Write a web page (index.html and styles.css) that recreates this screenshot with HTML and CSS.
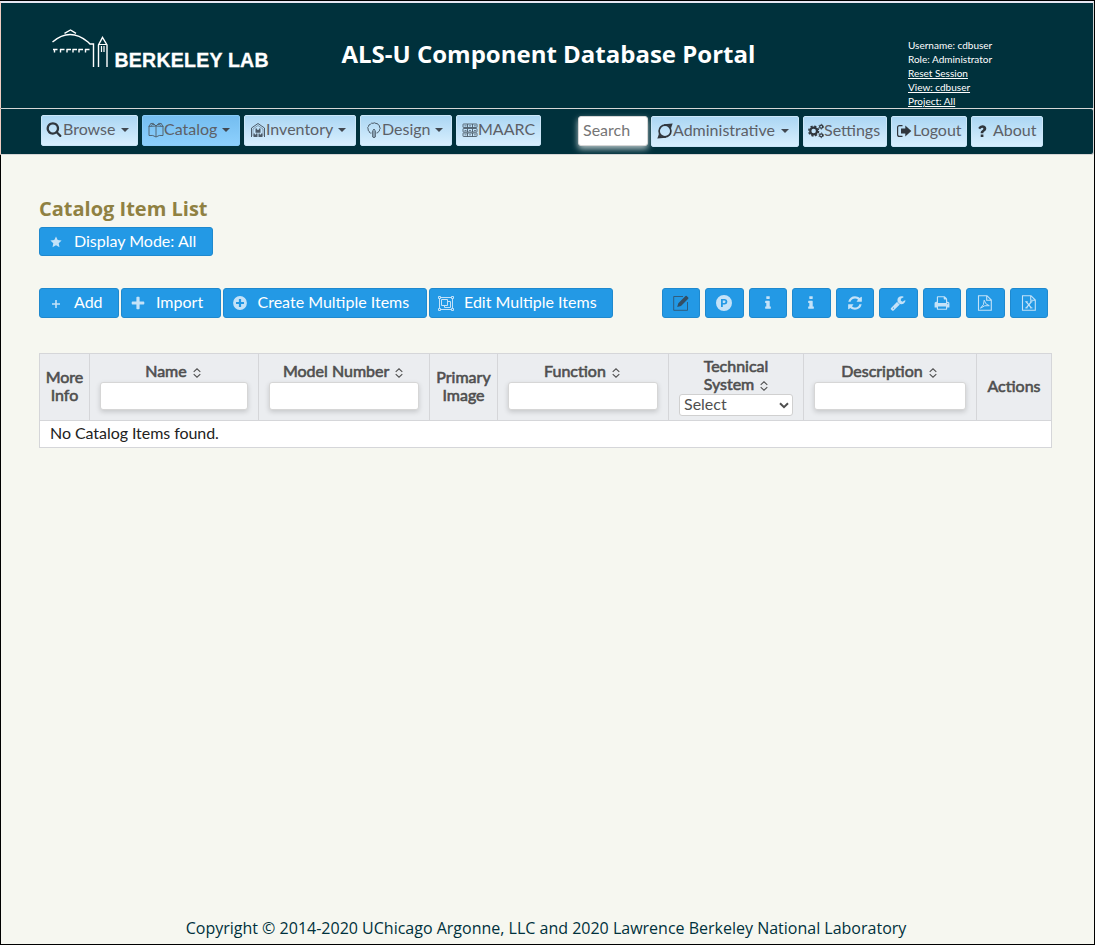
FILE: index.html
```html
<!DOCTYPE html>
<html lang="en">
<head>
<meta charset="utf-8">
<title>ALS-U Component Database Portal</title>
<link rel="stylesheet" href="styles.css">
</head>
<body>
<svg class="sprite" aria-hidden="true">
  <symbol id="search" viewBox="0 0 1792 1792"><path d="M1216 832q0-185-131.5-316.5t-316.5-131.5-316.5 131.5-131.5 316.5 131.5 316.5 316.5 131.5 316.5-131.5 131.5-316.5zm512 832q0 52-38 90t-90 38q-54 0-90-38l-343-342q-179 124-399 124-143 0-273.5-55.5t-225-150-150-225-55.5-273.5 55.5-273.5 150-225 225-150 273.5-55.5 273.5 55.5 225 150 150 225 55.5 273.5q0 220-124 399l343 343q37 37 37 90z"/></symbol>
  <symbol id="catalog" viewBox="0 0 16 16"><path fill="none" stroke="currentColor" stroke-width=".9" d="M.5 4.500L8 4l7.500.500M1 4.500V13.500q4-.800 7 1.500q3-2.300 7-1.500V4.500M8 4v11M1 4l2-2.500M15 4l-2-2.500M8 4Q5.500 0 2.500 1.500M8 4Q10.500 0 13.500 1.500M3 3.800Q4 1.500 6 2.600M13 3.800Q12 1.500 10 2.600"/></symbol>
  <symbol id="inventory" viewBox="0 0 16 16"><path fill="none" stroke="currentColor" stroke-width="1" d="M1.500 15V6L8 1.500L14.500 6v9"/><path fill="none" stroke="currentColor" stroke-width=".5" d="M3 14V7l5-3.500L13 7v7"/><path d="M5.500 6.500h1.500v1.200h2V6.500h1.500v4.200h-5zM3.500 11.500h1.300v1h1.200v-1h1.500v3.500h-4zM8.500 11.500h1.300v1h1.200v-1h1.500v3.500h-4z"/></symbol>
  <symbol id="design" viewBox="0 0 16 16"><path fill="none" stroke="currentColor" stroke-width="1" d="M5.500 11H4.300Q3 10.700 3.300 9.300Q1.500 8.700 2.200 7Q1 5.500 2.500 4.400Q2.500 2.500 4.300 2.400Q5.500.500 7 1.300Q8.500.200 10 1.500Q12 1.200 12.300 2.900Q14 3.300 13.500 5Q15 6.300 13.500 7.600Q14 9.200 12.400 9.600Q12.300 11 10.500 11M6.700 15V9L8 7l1.300 2v6q-1.300 1.200-2.600 0z"/><path d="M7.300 9h1.400v6H7.300z" opacity=".55"/></symbol>
  <symbol id="server" viewBox="0 0 16 16"><path fill="none" stroke="currentColor" stroke-width=".9" d="M1.500 2h13q.5 0 .5.500V5q0 .5-.5.500h-13Q1 5.500 1 5V2.500Q1 2 1.500 2zM1.500 6.500h13q.5 0 .5.500v2.500q0 .5-.5.500h-13Q1 10 1 9.500V7q0-.5.5-.5zM1.500 11h13q.5 0 .5.500V14q0 .5-.5.500h-13Q1 14.500 1 14v-2.500q0-.5.500-.5zM5.500 2v3.500M5.500 6.500V10M5.500 11v3.500M10.500 2v3.500M10.500 6.500V10M10.500 11v3.500"/><path d="M2.500 3.400h2v.8h-2zM2.500 7.900h2v.8h-2zM2.500 12.400h2v.8h-2zM7 3.400h2v.8H7zM7 7.900h2v.8H7zM7 12.400h2v.8H7zM12 3.400h2v.8h-2zM12 7.900h2v.8h-2zM12 12.400h2v.8h-2z"/></symbol>
  <symbol id="admin" viewBox="0 0 16 16"><ellipse cx="8" cy="8" rx="5.900" ry="5.900" fill="none" stroke="currentColor" stroke-width="1.700"/><path d="M7 1.300L15.700.500Q14.800 2.500 14 5.500L12 3Q10 1.800 7 2.500zM9 14.700L.300 15.500Q1.200 13.500 2 10.500L4 13Q6 14.200 9 13.500z"/></symbol>
  <symbol id="settings" viewBox="0 0 17 16"><circle cx="6" cy="8" r="3.600" fill="none" stroke="currentColor" stroke-width="2.400"/><circle cx="6" cy="8" r="5.200" fill="none" stroke="currentColor" stroke-width="1.600" stroke-dasharray="2.280 1.804"/><circle cx="14" cy="3.400" r="1.600" fill="none" stroke="currentColor" stroke-width="1.300"/><circle cx="14" cy="3.400" r="2.500" fill="none" stroke="currentColor" stroke-width=".9" stroke-dasharray="1.300 1.318"/><circle cx="14" cy="12.600" r="1.600" fill="none" stroke="currentColor" stroke-width="1.300"/><circle cx="14" cy="12.600" r="2.500" fill="none" stroke="currentColor" stroke-width=".9" stroke-dasharray="1.300 1.318"/></symbol>
  <symbol id="logout" viewBox="0 0 16 16"><path fill="none" stroke="currentColor" stroke-width="1.200" d="M6.500 2.600H3.500Q1.600 2.600 1.600 4.600v6.800q0 2 1.900 2H6.500"/><path d="M5 5.600h4.300V2.400L15.300 8l-6 5.600v-3.200H5z"/></symbol>
  <symbol id="question" viewBox="0 0 16 16"><path d="M6.700 11.400h2.700V14H6.700zM6.700 10.300V9.200q0-1.200 1.500-2 1.200-.6 1.200-1.400 0-1-1.300-1-1.100 0-2 1.500L4.200 4.900Q5.700 2.300 8.300 2.300q3.900.2 4 3.500 0 1.700-1.900 2.700-1 .6-1 1.200v.6z"/></symbol>
  <symbol id="star" viewBox="0 0 16 16"><path d="M8 2.500l1.700 3.500 3.900.5-2.900 2.700.8 4L8 11.300l-3.500 1.900.8-4L2.400 6.500 6.300 6z"/></symbol>
  <symbol id="plus-thin" viewBox="0 0 16 16"><path d="M7.200 5h1.600v3.200H12v1.600H8.800V13H7.200V9.800H4V8.200h3.200z"/></symbol>
  <symbol id="plus" viewBox="0 0 16 16"><path d="M7.200 1.700h1.600q.8 0 .8.800v3.900h3.900q.8 0 .8.800v1.600q0 .8-.8.800H9.600v3.900q0 .8-.8.800H7.200q-.8 0-.8-.8V9.600H2.500q-.8 0-.8-.8V7.200q0-.8.800-.8h3.900V2.500q0-.8.800-.8z"/></symbol>
  <symbol id="plus-circle" viewBox="0 0 16 16"><path fill-rule="evenodd" d="M8 1.100a6.900 6.900 0 1 1 0 13.800a6.900 6.900 0 1 1 0-13.800zM6.900 4v2.900H4v2.200h2.900V12h2.200V9.100H12V6.900H9.100V4z"/></symbol>
  <symbol id="group" viewBox="0 0 16 16"><path fill="none" stroke="currentColor" stroke-width="1" d="M.5 1.500h2v2h-2zM13.500 1.500h2v2h-2zM.5 13.500h2v2h-2zM13.500 13.500h2v2h-2zM2.500 2.500h11M2.500 14.500h11M1.500 3.500v10M14.500 3.500v10M3.500 4.500h6v6h-6zM9.500 6.500h3v6h-6v-2"/></symbol>
  <symbol id="edit" viewBox="0 0 16 16"><path fill="none" stroke="currentColor" stroke-width=".8" d="M10 1.500H.7v13.800h13.800V7"/><path d="M4.200 12l1.100-3.800L12.500 1q.6-.6 1.200 0l1.500 1.500q.6.600 0 1.200L8 10.900z"/></symbol>
  <symbol id="parking" viewBox="0 0 16 16"><path fill-rule="evenodd" d="M8 0a8 8 0 1 1 0 16A8 8 0 1 1 8 0zM5 4v8h1.800V9.500h2q2.500-.2 2.600-2.700Q11.300 4.200 8.800 4zm1.800 1.600h1.700q1 .1 1 1.200 0 1-1 1.100H6.800z"/></symbol>
  <symbol id="info" viewBox="-576 0 1792 1792"><path d="M640 1344v128q0 26-19 45t-45 19H64q-26 0-45-19t-19-45v-128q0-26 19-45t45-19h64V896H64q-26 0-45-19T0 832V704q0-26 19-45t45-19h384q26 0 45 19t19 45v576h64q26 0 45 19t19 45zM512 192v192q0 26-19 45t-45 19H192q-26 0-45-19t-19-45V192q0-26 19-45t45-19h256q26 0 45 19t19 45z"/></symbol>
  <symbol id="refresh" viewBox="0 0 1792 1792"><path d="M1639 1056q0 5-1 7-64 268-268 434.500t-478 166.500q-146 0-282.500-55t-243.500-157l-129 129q-19 19-45 19t-45-19-19-45v-448q0-26 19-45t45-19h448q26 0 45 19t19 45-19 45l-137 137q71 66 161 102t187 36q134 0 250-65t186-179q11-17 53-117 8-23 30-23h192q13 0 22.500 9.500t9.500 22.500zm25-800v448q0 26-19 45t-45 19h-448q-26 0-45-19t-19-45 19-45l138-138q-148-137-349-137-134 0-250 65t-186 179q-11 17-53 117-8 23-30 23h-199q-13 0-22.500-9.500t-9.500-22.500v-7q65-268 270-434.500t480-166.500q146 0 284 55.500t245 156.500l130-129q19-19 45-19t45 19 19 45z"/></symbol>
  <symbol id="wrench" viewBox="0 0 1792 1792"><path d="M448 1472q0-26-19-45t-45-19-45 19-19 45 19 45 45 19 45-19 19-45zm644-420l-682 682q-37 37-90 37-52 0-91-37l-106-108q-38-36-38-90 0-53 38-91l681-681q39 98 114.500 173.500t173.500 114.500zm634-435q0 39-23 106-47 134-164.500 217.500t-258.500 83.500q-185 0-316.500-131.500t-131.500-316.500 131.500-316.500 316.500-131.500q58 0 121.500 16.500t107.500 46.500q16 11 16 28t-16 28l-293 169v224l193 107q5-3 79-48.500t135.500-81 70.500-35.500q15 0 23.500 10t8.500 25z"/></symbol>
  <symbol id="print" viewBox="0 0 1792 1792"><path d="M448 1536h896v-256h-896v256zm0-640h896v-384h-160q-40 0-68-28t-28-68v-160h-640v640zm1152 64q0-26-19-45t-45-19-45 19-19 45 19 45 45 19 45-19 19-45zm128 0v416q0 13-9.500 22.500t-22.500 9.500h-224v160q0 40-28 68t-68 28h-960q-40 0-68-28t-28-68v-160h-224q-13 0-22.500-9.500t-9.500-22.500v-416q0-79 56.500-135.500t135.500-56.500h64v-544q0-40 28-68t68-28h672q40 0 88 20t76 48l152 152q28 28 48 76t20 88v256h64q79 0 135.500 56.500t56.500 135.500z"/></symbol>
  <symbol id="pdf" viewBox="0 0 16 16"><path fill="none" stroke="currentColor" stroke-width="1.100" d="M1.500.700h8.500l4.300 4.300v10.300H1.500zM9.700.700v4.600h4.600"/><path fill="none" stroke="currentColor" stroke-width="1" d="M3.500 13.200Q7.500 10 7.200 5.200Q8 9.500 12.300 10.700Q7.500 9.600 3.500 13.200z"/></symbol>
  <symbol id="excel" viewBox="0 0 16 16"><path fill="none" stroke="currentColor" stroke-width="1.100" d="M1.500.700h8.500l4.300 4.300v10.300H1.500zM9.700.700v4.600h4.600"/><path fill="none" stroke="currentColor" stroke-width="1.300" d="M5.300 6.800l5 6M10.300 6.800l-5 6"/><path fill="none" stroke="currentColor" stroke-width=".9" d="M4.200 6.700h2.500M9 6.700h2.500M4.200 12.900h2.500M9 12.900h2.500"/></symbol>
  <symbol id="sort" viewBox="0 0 8 10"><path fill="none" stroke="currentColor" stroke-width="1.100" d="M.7 3.800L4 .800l3.300 3M.7 6.200L4 9.200l3.300-3"/></symbol>
  <symbol id="chevron" viewBox="0 0 10 7"><path fill="none" stroke="currentColor" stroke-width="2" d="M1 1.200l4 4 4-4"/></symbol>
</svg>

<header class="banner">
  <svg class="logo" viewBox="0 0 220 42" role="img" aria-label="Berkeley Lab">
    <g fill="none" stroke="#fff" stroke-width="1.400">
      <path d="M.5 14Q18-1 36 14L38 16H41.500V39M12.500 5.300L18.500 2l5.500 3.300M46.500 39V17L50.500 9.500L55 17V39"/>
      <path stroke-width="1.200" d="M46 16.500h9M49.500 18v6M52 18v6"/>
      <path d="M1 21.500h4.500M8 21.500h4.500M14.500 21.500h4.500M20.500 21.500h4.500M26.500 21.500h4.500M33 21.500h4.500M2.500 21v3.500M8.500 21v3.500M15 21v3.500M21 21v3.500M27 21v3.500M33.500 21v3.500"/>
    </g>
    <text x="62.500" y="38.500" textLength="154">BERKELEY LAB</text>
  </svg>
  <h1 class="portal">ALS-U Component Database Portal</h1>
  <div class="session">
    <span>Username: cdbuser</span>
    <span>Role: Administrator</span>
    <a>Reset Session</a>
    <a>View: cdbuser</a>
    <a>Project: All</a>
  </div>
</header>

<nav class="menubar">
  <div class="menu">
    <a class="item browse"><svg class="ico"><use href="#search"/></svg>Browse<i class="caret"></i></a>
    <a class="item catalog active"><svg class="ico"><use href="#catalog"/></svg>Catalog<i class="caret"></i></a>
    <a class="item inventory"><svg class="ico"><use href="#inventory"/></svg>Inventory<i class="caret"></i></a>
    <a class="item design"><svg class="ico"><use href="#design"/></svg>Design<i class="caret"></i></a>
    <a class="item maarc"><svg class="ico"><use href="#server"/></svg>MAARC</a>
  </div>
  <div class="menu right">
    <input class="search" placeholder="Search">
    <a class="item administrative"><svg class="ico"><use href="#admin"/></svg>Administrative<i class="caret"></i></a>
    <a class="item settings"><svg class="ico"><use href="#settings"/></svg>Settings</a>
    <a class="item logout"><svg class="ico"><use href="#logout"/></svg>Logout</a>
    <a class="item about"><svg class="ico"><use href="#question"/></svg><span class="about-label">About</span></a>
  </div>
</nav>

<main class="content">
  <h2 class="title">Catalog Item List</h2>
  <button class="btn mode"><svg class="ico"><use href="#star"/></svg>Display Mode: All</button>

  <div class="toolbar">
    <div class="actions">
      <button class="btn add"><svg class="ico"><use href="#plus-thin"/></svg>Add</button>
      <button class="btn import"><svg class="ico"><use href="#plus"/></svg>Import</button>
      <button class="btn create"><svg class="ico"><use href="#plus-circle"/></svg>Create Multiple Items</button>
      <button class="btn multi"><svg class="ico"><use href="#group"/></svg>Edit Multiple Items</button>
    </div>
    <div class="tools">
      <button class="btn tool dark"><svg class="ico"><use href="#edit"/></svg></button>
      <button class="btn tool"><svg class="ico"><use href="#parking"/></svg></button>
      <button class="btn tool"><svg class="ico"><use href="#info"/></svg></button>
      <button class="btn tool"><svg class="ico"><use href="#info"/></svg></button>
      <button class="btn tool"><svg class="ico"><use href="#refresh"/></svg></button>
      <button class="btn tool"><svg class="ico"><use href="#wrench"/></svg></button>
      <button class="btn tool"><svg class="ico"><use href="#print"/></svg></button>
      <button class="btn tool"><svg class="ico"><use href="#pdf"/></svg></button>
      <button class="btn tool"><svg class="ico"><use href="#excel"/></svg></button>
    </div>
  </div>

  <section class="table">
    <div class="head">
      <div class="cell plain">More<br>Info</div>
      <div class="cell"><span>Name <svg class="sort"><use href="#sort"/></svg></span><input class="filter"></div>
      <div class="cell"><span>Model Number <svg class="sort"><use href="#sort"/></svg></span><input class="filter"></div>
      <div class="cell plain">Primary<br>Image</div>
      <div class="cell"><span>Function <svg class="sort"><use href="#sort"/></svg></span><input class="filter"></div>
      <div class="cell technical"><span>Technical<br>System <svg class="sort"><use href="#sort"/></svg></span><div class="pick" role="combobox">Select<svg class="chevron"><use href="#chevron"/></svg></div></div>
      <div class="cell"><span>Description <svg class="sort"><use href="#sort"/></svg></span><input class="filter"></div>
      <div class="cell plain">Actions</div>
    </div>
    <div class="empty">No Catalog Items found.</div>
  </section>
</main>

<footer class="footer">Copyright © 2014-2020 UChicago Argonne, LLC and 2020 Lawrence Berkeley National Laboratory</footer>
</body>
</html>
```

FILE: styles.css
```css
* { box-sizing: border-box; }

body {
  margin: 0;
  height: 945px;
  display: flex;
  flex-direction: column;
  overflow: hidden;
  background: linear-gradient(#000, #000) 0 0 / 1px 100% no-repeat #f6f7f0;
  border: 1px solid #000;
  border-left: 0;
  font: 16px/20px Lato, sans-serif;
}

.sprite { display: none; }
.ico { width: 16px; height: 16px; flex: none; fill: currentColor; }

.banner {
  height: 107px;
  flex: none;
  display: flex;
  border-top: 2px solid #e6e6f2;
  border-right: 1px solid #cfd4d4;
  border-left: 1px solid #f0cdc2;
  background: #00313c;
  color: #fff;
}
.logo { width: 220px; height: 42px; margin: 25px 0 0 51px; flex: none; }
.logo text { font: bold 19.5px "Liberation Sans", sans-serif; fill: #fff; stroke: #fff; stroke-width: .3px; }
.portal { margin: 34px 0 0 69.5px; width: 414.5px; font: bold 24px/34px "Open Sans", sans-serif; white-space: nowrap; }
.session {
  display: flex;
  flex-direction: column;
  margin: 35px 0 0 152px;
  font-size: 10px;
  line-height: 14px;
}
.session a { text-decoration: underline; }

.menubar {
  height: 47px;
  width: 1094px;
  flex: none;
  display: flex;
  justify-content: space-between;
  padding: 6px 50px 0 40px;
  border: 1px solid #d6d6d6;
  border-left-color: #f0cdc2;
  border-radius: 0 3px 3px 0;
  background: #00313c;
}
.menu { display: flex; gap: 4px; }
.menu.right { padding-top: 1px; }
.item {
  height: 31px;
  display: flex;
  align-items: center;
  padding: 0 0 3px 6px;
  border: 1px solid #cbe6f8;
  border-radius: 2px;
  background: linear-gradient(#abd6f3, #d8effe);
  color: #5c6067;
  white-space: nowrap;
}
.item .ico { color: #30363d; margin: 1px 0 0 -1px; }
.browse .ico { margin: 0 1px 0 -2px; }
.item.active { background: linear-gradient(#74bdf0, #8dd0fd); border-color: #88cbf8; }
.catalog .ico, .inventory .ico, .design .ico, .maarc .ico { color: #4c5b68; }
.caret { margin: 2px 0 0 5px; border: 4px solid transparent; border-top-color: #414851; border-bottom: 0; }
.browse { width: 97px; }
.catalog { width: 98px; }
.inventory { width: 112px; }
.design { width: 92px; }
.design .caret { margin-left: 4px; }
.maarc { width: 85px; }
.search {
  width: 70px;
  height: 30px;
  margin-right: -1px;
  padding: 0 4px 3px;
  border: 1px solid #d6d6d6;
  border-radius: 3px;
  background: #fff;
  box-shadow: 0 3px 6px rgba(255, 255, 255, .7);
  font: 16px Lato, sans-serif;
}
.search::placeholder { color: #757575; }
.administrative { width: 148px; }
.administrative .caret { margin-left: 6px; }
.settings { width: 84px; }
.right .settings, .right .logout, .right .about { padding-left: 5px; }
.logout { width: 76px; }
.logout .ico { margin-right: 1px; }
.about { width: 72px; }
.about .ico { margin-left: -3px; }
.about-label { margin-left: 3px; }

.content { padding: 40px 0 0 39px; width: 1052px; flex: 1; }
.title { margin: 0; font: bold 20px/27px "Open Sans", sans-serif; color: #8f8142; }
.btn {
  height: 30px;
  display: flex;
  align-items: center;
  padding: 0 0 3px 8px;
  border: 1px solid #1f89ce;
  border-radius: 3px;
  background: #2399e5;
  color: #fff;
  font: 16px/20px Lato, sans-serif;
  white-space: nowrap;
}
.btn .ico { color: #c4e2f8; margin: 2px 10px 0 0; }
.mode { width: 174px; height: 29px; margin-top: 5px; padding-bottom: 2px; }
.toolbar { display: flex; justify-content: space-between; margin: 32px 4px 35px 0; }
.actions { display: flex; gap: 2px; }
.tools { display: flex; gap: 5px; }
.add { width: 80px; }
.import { width: 100px; }
.create { width: 204px; }
.multi { width: 184px; }
.create .ico { margin-right: 9.500px; }
.tool { width: 38.5px; padding: 0; justify-content: center; }
.tool .ico { margin: 0; }
.tool.dark .ico { color: #344e63; }

.table { width: 1013px; border: 1px solid #d5d6d9; background: #fff; }
.head {
  display: grid;
  grid-template-columns: 50px 169px 171px 68px 171px 135px 173px 74px;
  height: 67px;
  border-bottom: 1px solid #d5d6d9;
  background: #ebedf0;
}
.cell {
  display: flex;
  flex-direction: column;
  align-items: center;
  justify-content: center;
  padding: 0 10px 2px;
  border-right: 1px solid #d5d6d9;
  line-height: 18px;
  text-align: center;
  color: #4f4f4f;
  -webkit-text-stroke: .6px #4f4f4f;
}
.cell:last-child { border-right: 0; }
.cell.plain { padding-bottom: 3px; }
.sort { width: 8px; height: 10px; margin-left: 2px; vertical-align: -1px; }
.cell span { margin-left: -2px; }
.cell.technical span { margin-left: 0; }
.filter {
  width: 100%;
  height: 28px;
  margin-top: 2px;
  border: 1px solid #d6d6d6;
  border-radius: 3px;
  background: #fff;
  box-shadow: 0 2px 5px rgba(0, 0, 0, .16);
}
.pick {
  width: 100%;
  height: 22px;
  display: flex;
  align-items: center;
  justify-content: space-between;
  margin-top: 1px;
  padding: 0 3px 2px 4px;
  border: 1px solid #d0d0d0;
  border-radius: 3px;
  background: #fff;
  color: #4f4f4f;
  -webkit-text-stroke: 0;
}
.chevron { width: 10px; height: 7px; margin-top: 3px; }
.empty { height: 26px; padding: 2px 10px; color: #222; letter-spacing: -.06px; }

.footer {
  padding: 0 2px 4px 0;
  text-align: center;
  font: 16px/24px "Open Sans", sans-serif;
  color: #00313c;
}
```
